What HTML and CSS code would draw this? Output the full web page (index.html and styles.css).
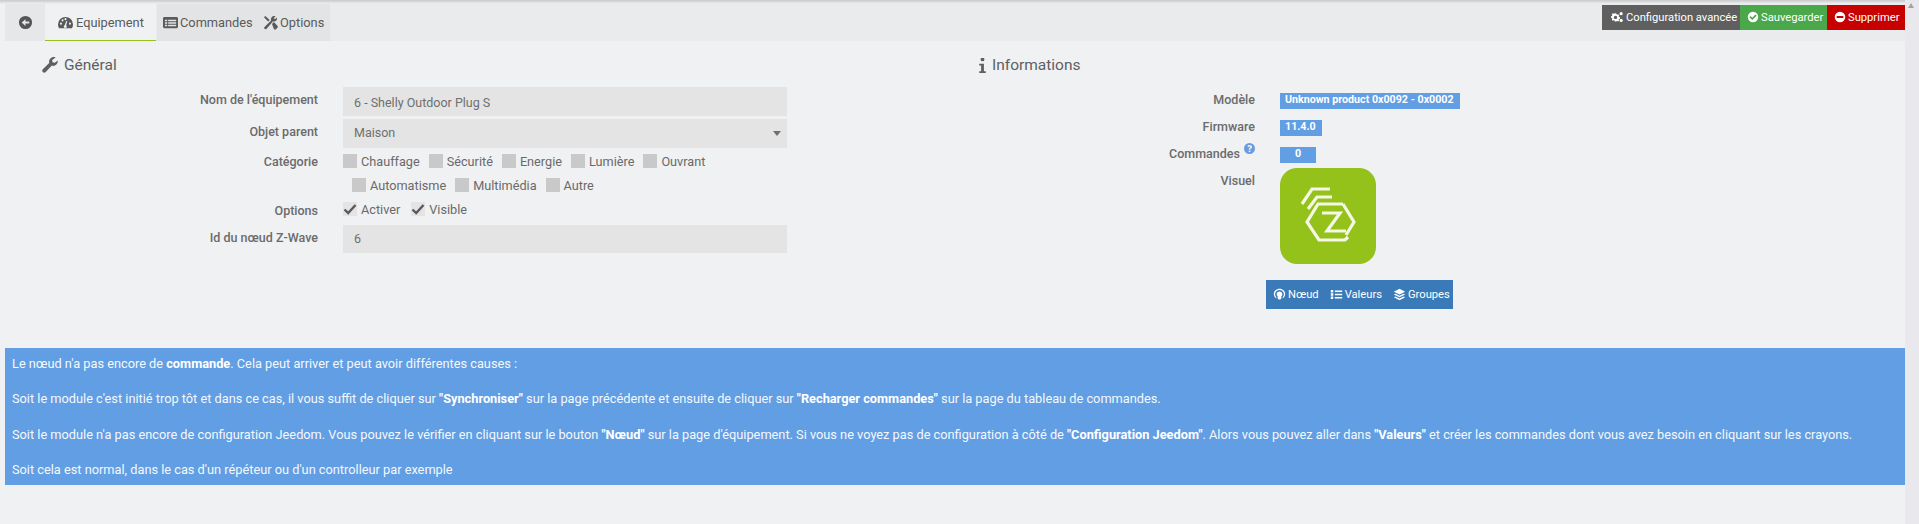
FILE: index.html
```html
<!DOCTYPE html>
<html lang="fr">
<head>
<meta charset="utf-8">
<title>Equipement</title>
<link rel="stylesheet" href="styles.css">
</head>
<body>
<div class="page">
  <div class="content">
    <nav class="tabbar">
      <a class="tab tab-back"><svg class="ic ic-back" viewBox="0 0 16 16"><path d="M8 1a7 7 0 1 0 0 14A7 7 0 0 0 8 1zm4 8H8v2.6L3.9 8 8 4.4V7h4z"/></svg></a>
      <a class="tab tab-active"><svg class="ic ic-tab" viewBox="0 0 16 16"><path fill-rule="evenodd" d="M8 2a8 8 0 0 0-8 8c0 1.500.4 2.800 1.100 4h13.800A8 8 0 0 0 16 10a8 8 0 0 0-8-8zM3.200 10.300a1.100 1.100 0 1 1 0-2.200 1.100 1.100 0 0 1 0 2.200zm1.700-3.500a1.100 1.100 0 1 1 0-2.200 1.100 1.100 0 0 1 0 2.200zM8 5.500a1.100 1.100 0 1 1 0-2.200 1.100 1.100 0 0 1 0 2.200zm1.400 6.700a1.600 1.600 0 1 1-2.300-1.400l1.800-4.500 1 .3-1.300 4.700c.5.200.8.500.8.900zm3.400-1.900a1.100 1.100 0 1 1 0-2.200 1.100 1.100 0 0 1 0 2.200z"/></svg>Equipement</a>
      <a class="tab tab-off tab-cmd"><svg class="ic ic-tab" viewBox="0 0 16 16"><path fill-rule="evenodd" d="M1.500 2h13c.6 0 1.500.6 1.500 1.500v9c0 .8-.7 1.500-1.500 1.500h-13C.7 14 0 13.300 0 12.500v-9C0 2.700.7 2 1.500 2zM2 5v1.700h2.500V5zm3.500 0v1.700H14V5zM2 7.700v1.600h2.500V7.700zm3.500 0v1.600H14V7.700zM2 10.300V12h2.500v-1.700zm3.500 0V12H14v-1.700z"/></svg>Commandes</a>
      <a class="tab tab-off tab-opt"><svg class="ic ic-tab" viewBox="0 0 16 16"><path d="M1 2.500 2.500 1l4.600 4.300-1.700 1.700zM12 1c.5 0 1 .1 1.400.3l-2 2 1.300 1.300 2-2c.6 1.600 0 3.600-2 4.200-.7.200-1.300.100-1.900-.1L3.600 14.800c-.5.500-1.500.500-2-.1-.5-.5-.5-1.400 0-1.900l7-7C8 3.300 9.800 1 12 1zM9.600 9.500l2-2 3.800 3.900c.5.600.5 1.600 0 2.300l-1.500 1.500c-.6.500-1.600.5-2.200 0z"/></svg>Options</a>
      <div class="actions">
        <a class="btn btn-gray"><svg class="ic ic-btn ic-gears" viewBox="0 0 16 16"><path fill-rule="evenodd" d="M5 3h2l.3 1.400 1 .5 1.300-.7 1.300 1.400-.7 1.200.4 1 1.400.4v2l-1.400.3-.4 1 .7 1.200-1.300 1.400-1.300-.7-1 .4L7 14H5l-.3-1.400-1-.4-1.300.7L1 11.500l.7-1.200-.4-1L0 9V7l1.400-.4.4-1L1 4.400 2.400 3l1.300.7 1-.4zm1 3.200a2.300 2.300 0 1 0 0 4.600 2.300 2.300 0 0 0 0-4.600z"/><circle cx="13.500" cy="3.500" r="2.100"/><circle cx="13.500" cy="12.500" r="2.100"/></svg>Configuration avancée</a>
        <a class="btn btn-green"><svg class="ic ic-btn" viewBox="0 0 16 16"><path d="M8 1a7 7 0 1 0 0 14A7 7 0 0 0 8 1zm-1 11L3.300 8.300l1.500-1.500L7 9l4.200-4.200 1.500 1.500z"/></svg>Sauvegarder</a>
        <a class="btn btn-red"><svg class="ic ic-btn" viewBox="0 0 16 16"><path d="M8 1a7 7 0 1 0 0 14A7 7 0 0 0 8 1zm4.500 8.300h-9V6.700h9z"/></svg>Supprimer</a>
      </div>
    </nav>

    <main class="columns">
      <section class="col-left">
        <h2 class="heading heading-left"><svg class="ic ic-head" viewBox="0 0 16 16"><path d="M15.800 3.600c.3 2.600-1.700 5.300-4.300 5.300-.6 0-1.100-.1-1.600-.3L3.700 15c-.9.900-2.100.9-2.900 0-.8-.8-.8-2 0-2.800L7.200 6c-.7-2.800 1.300-6 4.500-6 .7 0 1.300.1 1.900.4L10.200 3l.3 2.300 2.300.4z"/></svg>Général</h2>
        <div class="form">
          <div class="row row-field">
            <label class="lbl">Nom de l'équipement</label>
            <div class="input input-name">6 - Shelly Outdoor Plug S</div>
          </div>
          <div class="row row-field row-last">
            <label class="lbl">Objet parent</label>
            <div class="input input-select">Maison<span class="caret"></span></div>
          </div>
          <div class="row row-check">
            <label class="lbl">Catégorie</label>
            <div class="checks">
              <div class="line">
                <span class="chk"><i class="box"></i>Chauffage</span>
                <span class="chk"><i class="box"></i>Sécurité</span>
                <span class="chk"><i class="box"></i>Energie</span>
                <span class="chk"><i class="box"></i>Lumière</span>
                <span class="chk"><i class="box"></i>Ouvrant</span>
              </div>
              <div class="line line-indent">
                <span class="chk"><i class="box"></i>Automatisme</span>
                <span class="chk"><i class="box"></i>Multimédia</span>
                <span class="chk"><i class="box"></i>Autre</span>
              </div>
            </div>
          </div>
          <div class="row row-check row-opts">
            <label class="lbl lbl-opts">Options</label>
            <div class="checks">
              <div class="line line-opts">
                <span class="chk"><i class="box box-on"><svg viewBox="0 0 14 14"><path d="M1.500 7.500 5.200 11 12.500 3"/></svg></i>Activer</span>
                <span class="chk"><i class="box box-on"><svg viewBox="0 0 14 14"><path d="M1.500 7.500 5.200 11 12.500 3"/></svg></i>Visible</span>
              </div>
            </div>
          </div>
          <div class="row row-field row-id">
            <label class="lbl">Id du nœud Z-Wave</label>
            <div class="input">6</div>
          </div>
        </div>
      </section>

      <section class="col-right">
        <h2 class="heading heading-right"><svg class="ic ic-info" viewBox="0 0 7 16"><path d="M1.500 1.500a2 2 0 1 1 4 0 2 2 0 0 1-4 0zM0 6h5v8h2v2H0v-2h2V8H0z"/></svg>Informations</h2>
        <dl class="info">
          <div class="irow"><dt class="ilbl">Modèle</dt><dd class="badge">Unknown product 0x0092 - 0x0002</dd></div>
          <div class="irow"><dt class="ilbl">Firmware</dt><dd class="badge">11.4.0</dd></div>
          <div class="irow irow-last"><dt class="ilbl">Commandes<svg class="ic ic-help" viewBox="0 0 16 16"><path d="M8 0a8 8 0 1 0 0 16A8 8 0 0 0 8 0zm1.300 13H6.900v-2.200h2.400zm2-5.800c-.5.700-1.700 1.100-2 1.700-.1.200-.1.500-.1.800H7V9c0-1.800 2.200-1.900 2.200-3.100 0-.5-.5-.9-1.100-.9-.7 0-1.200.5-1.500 1.100L4.900 4.900C5.600 3.700 6.700 3 8.200 3c1.800 0 3.600 1.300 3.600 3 0 .4-.2.800-.5 1.200z"/></svg></dt><dd class="badge badge-num">0</dd></div>
          <div class="irow irow-img"><dt class="ilbl">Visuel</dt><dd class="visual">
            <svg class="logo" viewBox="0 0 96 96"><rect width="96" height="96" rx="17" fill="#94c11a"/><g fill="none" stroke="#f4f8e4" stroke-width="3.200"><path d="M50 21H32L22 36"/><path d="M52 29H37L28 41"/><path d="M63 36H38L27 54l12 18h26l3-3"/><path d="M63 36l11 18-8 13"/><path d="M42 45h18L47 63h19"/></g></svg>
          </dd></div>
        </dl>
        <div class="btn-group">
          <a class="gbtn"><svg class="ic ic-group" viewBox="0 0 16 16"><path d="M8 1C4 1 1 3.800 1 7.500c0 2.300 1.200 4.200 3 5.300V11c-.8-.8-1.400-2-1.400-3.400C2.600 4.700 5 2.500 8 2.500s5.400 2.200 5.400 5.100c0 1.400-.6 2.600-1.400 3.400v1.800c1.800-1.100 3-3 3-5.300C15 3.800 12 1 8 1zm0 3.200c-2 0-3.500 1.500-3.500 3.400 0 1 .5 2 1.200 2.600v2.300l1.300 1.500h2l1.300-1.500v-2.300c.7-.6 1.200-1.600 1.200-2.600 0-1.900-1.500-3.400-3.500-3.400z"/></svg>Nœud</a>
          <a class="gbtn"><svg class="ic ic-group" viewBox="0 0 16 16"><path d="M1 2.500h3v3H1zm5 .5h9v2H6zM1 6.500h3v3H1zm5 .5h9v2H6zm-5 3.500h3v3H1zm5 .5h9v2H6z"/></svg>Valeurs</a>
          <a class="gbtn"><svg class="ic ic-group" viewBox="0 0 16 16"><path d="M8 1 1 4.500 8 8l7-3.500zM3 7 1 8l7 3.500L15 8l-2-1-5 2.500zm0 3.500-2 1L8 15l7-3.500-2-1-5 2.500z"/></svg>Groupes</a>
        </div>
      </section>
    </main>

    <section class="alert">
      <p>Le nœud n'a pas encore de <b>commande</b>. Cela peut arriver et peut avoir différentes causes :</p>
      <p>Soit le module c'est initié trop tôt et dans ce cas, il vous suffit de cliquer sur <b>"Synchroniser"</b> sur la page précédente et ensuite de cliquer sur <b>"Recharger commandes"</b> sur la page du tableau de commandes.</p>
      <p>Soit le module n'a pas encore de configuration Jeedom. Vous pouvez le vérifier en cliquant sur le bouton <b>"Nœud"</b> sur la page d'équipement. Si vous ne voyez pas de configuration à côté de <b>"Configuration Jeedom"</b>. Alors vous pouvez aller dans <b>"Valeurs"</b> et créer les commandes dont vous avez besoin en cliquant sur les crayons.</p>
      <p>Soit cela est normal, dans le cas d'un répéteur ou d'un controlleur par exemple</p>
    </section>
  </div>
  <aside class="scrollbar"><span class="arrow"></span></aside>
</div>
</body>
</html>
```

FILE: styles.css
```css
* { box-sizing: border-box; }
html, body { margin: 0; height: 524px; overflow: hidden; }
body {
  background: #eff1f3;
  color: #5f5f5f;
  font-family: Roboto, "Liberation Sans", sans-serif;
  font-size: 13px;
}
a { color: inherit; text-decoration: none; }
p, dl, dd, h2 { margin: 0; }
i { font-style: normal; }

.page { display: flex; height: 524px; }
.content {
  flex: 1;
  min-width: 0;
  padding-top: 4px;
  background: linear-gradient(#c9c9cb, #e6e7e8 3px, #eff1f3 4px) no-repeat top / 100% 4px;
}
.scrollbar { width: 14px; background: #e9e9ed; position: relative; flex: none; }
.arrow {
  position: absolute; top: 3px; left: 3px; width: 0; height: 0;
  border-left: 3px solid transparent; border-right: 3px solid transparent;
  border-bottom: 5px solid #a3a3a6;
}

.ic { fill: currentColor; flex: none; display: block; }

.tabbar {
  display: flex;
  height: 37px;
  margin-left: 5px;
  background: #eaebec;
  align-items: stretch;
}
.tab { display: flex; align-items: center; color: #5a5a5a; font-size: 12.800px; }
.tab-back { width: 40px; justify-content: center; background: #e6e7e8; color: #555; }
.ic-back { width: 15px; height: 15px; }
.tab-active {
  width: 111px; padding-left: 13px; background: #eff1f3;
  border-bottom: 1px solid #94c11a; margin-right: 1px;
}
.tab-off { background: #e3e4e5; }
.tab-cmd { width: 101px; padding-left: 6px; }
.tab-opt { width: 72px; padding-left: 5px; }
.ic-tab { width: 15px; height: 15px; margin-right: 2px; }
.tab-active .ic-tab { margin-right: 3px; }

.actions { display: flex; margin-left: auto; margin-right: -1px; margin-top: 1px; height: 25px; }
.btn { display: flex; align-items: center; color: #fff; font-size: 11.200px; padding: 0 0 1px 7px; }
.ic-btn { width: 12px; height: 12px; margin-right: 2px; }
.ic-gears { width: 14px; margin-right: 2px; }
.btn-gray { width: 138px; background: #5f5f5f; padding-left: 8px; }
.btn-green { width: 87px; background: #4aa74a; }
.btn-red { width: 79px; background: #c70000; }

.columns { display: grid; grid-template-columns: 960px 1fr; height: 268px; }
.heading { display: flex; align-items: center; height: 20px; margin-top: 14px; font-size: 15.500px; font-weight: 400; color: #5f5f5f; }
.heading-left { padding-left: 42px; }
.heading-right { padding-left: 19px; }
.ic-head { width: 16px; height: 16px; margin-right: 6px; }
.ic-info { width: 7px; height: 15px; margin-right: 6px; }

.form { margin-top: 12px; }
.row { display: grid; grid-template-columns: 318px 444px; column-gap: 25px; }
.row-field { margin-bottom: 3px; }
.row-last { margin-bottom: 1px; }
.row-opts { margin-bottom: 4px; }
.lbl { font-weight: 500; font-size: 12.500px; text-align: right; color: #6b6b6b; line-height: 26px; }
.lbl-opts { line-height: 28px; height: 24px; }
.input {
  position: relative;
  height: 29px; line-height: 28px; padding-left: 11px;
  background: #e3e4e3; color: #6f6f6f; font-size: 12.500px;
}
.input-name { line-height: 31px; }
.row-id .input { height: 28px; }
.caret {
  position: absolute; right: 6px; top: 12px; width: 0; height: 0;
  border-left: 4px solid transparent; border-right: 4px solid transparent;
  border-top: 5px solid #6f6f6f;
}
.line { display: flex; height: 24px; align-items: center; gap: 9px; color: #6a6a6a; font-size: 12.700px; }
.line-indent { padding-left: 9px; }
.line-opts { gap: 11px; }
.chk { display: flex; align-items: center; }
.box { display: block; width: 14px; height: 14px; background: #c9c9c9; margin-right: 4px; }
.box-on { background: #e3e4e3; }
.box svg { display: block; fill: none; stroke: #5a5a5a; stroke-width: 2.400; }

.info { margin-top: 18px; }
.irow { display: grid; grid-template-columns: 295px auto; column-gap: 25px; justify-content: start; height: 16px; margin-bottom: 11px; }
.irow-last { margin-bottom: 5px; }
.irow-img { height: 96px; margin-bottom: 0; }
.ilbl { display: flex; justify-content: flex-end; align-items: flex-start; font-weight: 500; font-size: 12.500px; line-height: 13px; color: #6b6b6b; }
.irow-img .ilbl { line-height: 26px; }
.ic-help { width: 11px; height: 11px; margin: -4px 0 0 4px; color: #6a9be0; }
.badge {
  background: #629ee3; color: #fff; font-weight: 700; font-size: 10.700px;
  line-height: 13px; height: 16px; padding: 0 6px 0 5px; width: fit-content;
}
.badge-num { width: 36px; text-align: center; padding: 0; }
.logo { display: block; width: 96px; height: 96px; }

.btn-group {
  display: flex; align-items: center; gap: 11px;
  width: 187px; height: 29px; margin: 16px 0 0 306px; padding: 0 0 1px 7px;
  background: #3a7ab8; color: #fff; font-size: 11.200px; font-weight: 400;
}
.gbtn { display: flex; align-items: center; }
.ic-group { width: 13px; height: 13px; margin-right: 2px; }

.alert {
  margin: 39px 0 0 5px;
  padding: 7px 7px 7px;
  background: #629ee3;
  color: #f4f8fd;
  font-size: 12.770px;
  line-height: 17.600px;
}
.alert p + p { margin-top: 17.700px; }
.alert b { font-weight: 700; color: #fff; }
```
